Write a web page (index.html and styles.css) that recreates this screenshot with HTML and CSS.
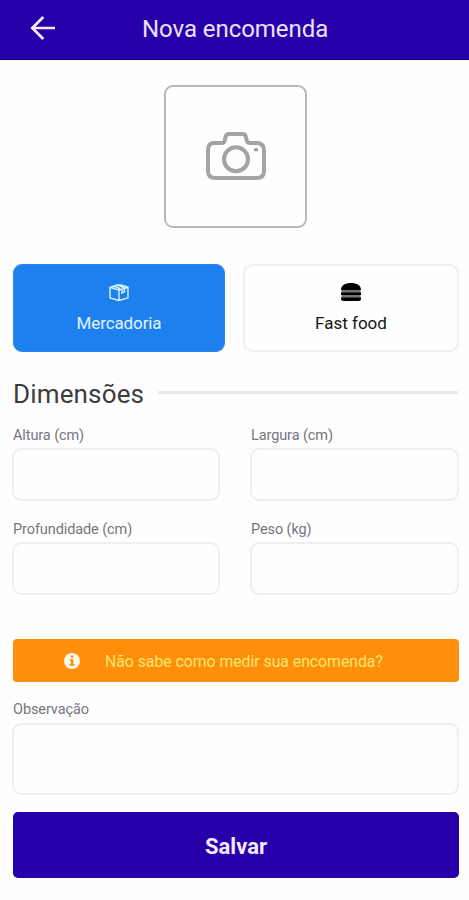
FILE: index.html
```html
<!DOCTYPE html>
<html lang="pt-BR">
<head>
<meta charset="utf-8">
<meta name="viewport" content="width=device-width, initial-scale=1">
<title>Nova encomenda</title>
<link rel="stylesheet" href="styles.css">
</head>
<body>
<header class="topbar">
  <button class="back" aria-label="Voltar">
    <svg width="26" height="26" viewBox="0 0 26 26"><path d="M25 13H2.500M13.300 2 2.300 13l11 11"/></svg>
  </button>
  <h1>Nova encomenda</h1>
</header>
<main class="content">
  <button class="photo" aria-label="Adicionar foto">
    <svg width="60" height="48" viewBox="0 0 60 48">
      <path d="M8 11h7.500q3 0 3.400-3l.5-2.500Q20 2 23 2h13.500q3 0 3.600 3.500l.5 2.500q.4 3 3.400 3h6.500Q58 11 58 18.500V39q0 7-7.500 7h-41Q2 46 2 39V18.500Q2 11 8 11Z"/>
      <circle cx="30" cy="27.300" r="12"/>
      <rect class="flash" x="48" y="16.300" width="4" height="3" rx="1"/>
    </svg>
  </button>
  <div class="types">
    <button class="type selected">
      <svg class="box" width="20" height="18" viewBox="0 0 20 18"><path d="M1 3.500 8 1l5 .3 6 2v10.500L10 16.500 1 14ZM1 3.500 10 6l9-2.700M10 6v10.500M4.500 2.500Q9 2.500 11 5.500M13 5v4l2.500-1.500V4L9 1.200"/></svg>
      <span>Mercadoria</span>
    </button>
    <button class="type">
      <svg width="22" height="20" viewBox="0 0 22 20"><path fill="#777" d="M1.500 7h19v10h-19z"/><path d="M1 8C1 3.500 5 1 11 1s10 2.500 10 7ZM1 10.500h20v2.500H1ZM1 15.500h20v1q0 2.500-2.500 2.500h-15Q1 19 1 16.500Z"/></svg>
      <span>Fast food</span>
    </button>
  </div>
  <div class="section"><h2>Dimensões</h2><hr></div>
  <div class="fields">
    <label><span>Altura (cm)</span><input type="text"></label>
    <label><span>Largura (cm)</span><input type="text"></label>
    <label><span>Profundidade (cm)</span><input type="text"></label>
    <label><span>Peso (kg)</span><input type="text"></label>
  </div>
  <button class="help">
    <svg width="16" height="16" viewBox="0 0 16 16"><circle cx="8" cy="8" r="8"/><path d="M6.800 2.500h2.600v2.300H6.800ZM5.700 6.200h3.700v4.800h1.200v1.700H5.500V11h1.300V7.900H5.700Z"/></svg>
    <span>Não sabe como medir sua encomenda?</span>
  </button>
  <label class="note"><span>Observação</span><textarea></textarea></label>
  <button class="save">Salvar</button>
</main>
</body>
</html>
```
FILE: styles.css
```css
* { box-sizing: border-box; }
body { margin: 0; min-height: 900px; background: #fefefe; font-family: Roboto, sans-serif; }
button { border: 0; padding: 0; margin: 0; font: inherit; background: none; }
svg { display: block; }

.topbar { height: 60px; background: #2600a8; border-bottom: 1px solid #17007c; display: flex; align-items: center; padding: 0 0 4px 30px; }
.back { width: 26px; }
.back svg { fill: none; stroke: #f4eaff; stroke-width: 2.7; }
h1 { margin: 3px 0 0 86px; font-size: 24px; line-height: 30px; font-weight: 400; letter-spacing: -.05px; color: #eee0ff; }

.content { padding: 25px 10px 0 12px; }
.photo { display: flex; align-items: center; justify-content: center; width: 143px; height: 143px; margin: 0 auto 36px 152px; padding-bottom: 2px; border: 2px solid #b8b8b8; border-radius: 9px; }
.photo svg { fill: none; stroke: #a3a3a3; stroke-width: 4; }
.photo .flash { fill: #999; stroke: none; }

.types { display: grid; grid-template-columns: 212px 216px; gap: 18px; padding-left: 1px; }
.type { height: 88px; border: 2px solid #efefef; border-radius: 9px; display: flex; flex-direction: column; align-items: center; padding-top: 16px; gap: 9px; font-size: 17px; line-height: 24px; color: #141414; }
.type.selected { background: #1d80ee; border: 1px solid #2b87ee; padding-top: 19px; color: #e0f5ff; letter-spacing: -.1px; }
.box { fill: none; stroke: #dcf4ff; stroke-width: 1.4; }

.section { display: flex; align-items: center; gap: 14px; height: 34px; margin-top: 24px; padding-left: 1px; }
h2 { margin: 2px 0 0; font-size: 26px; line-height: 34px; font-weight: 400; letter-spacing: .15px; color: #3c3c3c; }
hr { flex: 1; height: 3px; margin: 0 1px 2px 0; border: 0; background: #e9e9e9; }

.fields { display: grid; grid-template-columns: 208px 209px; column-gap: 30px; row-gap: 13px; margin-top: 14px; }
label { display: block; font-size: 14.500px; line-height: 18px; color: #77757f; }
label span { display: block; padding-left: 1px; letter-spacing: -.1px; }
input, textarea { display: block; width: 100%; margin: 3px 0 0; padding: 12px; border: 2px solid #efefef; border-radius: 9px; background: #fefefe; font: inherit; resize: none; outline: 0; }
input { height: 53px; }
.fields label { height: 81px; padding-top: 3px; }

.help { display: flex; align-items: center; width: 446px; height: 43px; margin: 40px 0 0 1px; padding-left: 51px; border-radius: 4px; background: #ff8f0a; color: #ffe76e; font-size: 15.750px; }
.help span { padding-top: 2px; }
.help svg { margin-right: 25px; fill: #fff8e8; }
.help path { fill: #ed9412; }
.note { margin-top: 19px; }
.note textarea { height: 72px; margin-top: 4px; }
.save { display: block; width: 446px; height: 66px; margin: 17px 0 0 1px; padding-top: 2px; border-radius: 5px; background: #2600a8; color: #f5e7ff; font-size: 22px; font-weight: 700; }
```
